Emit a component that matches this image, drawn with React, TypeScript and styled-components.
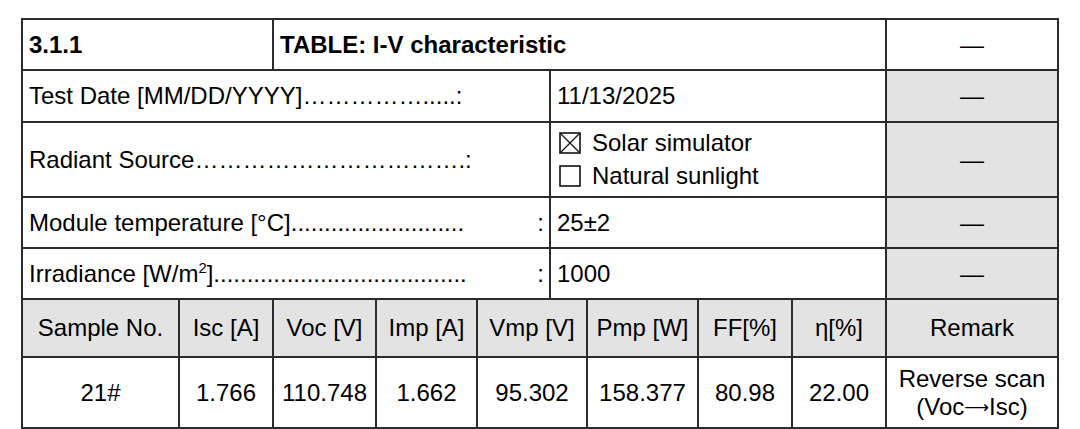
import styled, { createGlobalStyle } from 'styled-components'

const GlobalStyle = createGlobalStyle`
  html, body {
    margin: 0;
    padding: 0;
    background: #fff;
  }
  body {
    font-family: 'Liberation Sans', Arial, sans-serif;
    color: #000;
    overflow: hidden;
  }
`

const Page = styled.div`
  width: 1080px;
  height: 429px;
  padding: 18px 0 0 21px;
  box-sizing: border-box;
  overflow: hidden;
`

const Sheet = styled.div`
  display: grid;
  grid-template-columns: 155px 92px 101px 99px 71px 35px 109px 92px 92px 170px;
  grid-template-rows: 49px 50px 73px 49px 49px 56px 69px;
  gap: 2px;
  padding: 2px;
  width: max-content;
  background: #2b2b2b;
`

const Cell = styled.div<{ $span?: number; $shade?: boolean; $center?: boolean; $bold?: boolean }>`
  grid-column: span ${(p) => p.$span ?? 1};
  display: flex;
  align-items: center;
  justify-content: ${(p) => (p.$center ? 'center' : 'flex-start')};
  text-align: ${(p) => (p.$center ? 'center' : 'left')};
  padding: ${(p) => (p.$center ? '0 1px' : '0 6px')};
  background: ${(p) => (p.$shade ? '#e3e3e3' : '#fff')};
  font-size: 24px;
  font-weight: ${(p) => (p.$bold ? 700 : 400)};
  line-height: 1.13;
  white-space: nowrap;
  overflow: hidden;
`

const Label = styled(Cell)`
  justify-content: space-between;
  padding-right: 5px;
`

const Sup = styled.sup`
  font-size: 0.62em;
  line-height: 0;
  vertical-align: 0.62em;
`

const Remark = styled.div`
  text-align: center;
`

const Arrow = styled.span`
  font-family: 'DejaVu Sans', sans-serif;
  font-size: 0.72em;
  vertical-align: 0.12em;
`

const Options = styled.div`
  display: flex;
  flex-direction: column;
  gap: 3px;
  padding-left: 2px;
`

const Option = styled.div`
  display: flex;
  align-items: center;
  gap: 11px;
  height: 30px;
`

const Box = styled.svg`
  width: 22px;
  height: 22px;
  flex: none;
`

function CheckBox({ checked }: { checked?: boolean }) {
  return (
    <Box viewBox="0 0 22 22">
      <rect x="1" y="1" width="20" height="20" fill="none" stroke="#111" strokeWidth="1.6" />
      {checked && (
        <path d="M1.5 1.5 L20.5 20.5 M20.5 1.5 L1.5 20.5" stroke="#111" strokeWidth="1.2" />
      )}
    </Box>
  )
}

const headers = ['Sample No.', 'Isc [A]', 'Voc [V]', 'Imp [A]', 'Vmp [V]', 'Pmp [W]', 'FF[%]', 'η[%]', 'Remark']
const values = ['21#', '1.766', '110.748', '1.662', '95.302', '158.377', '80.98', '22.00']

export default function App() {
  return (
    <Page>
      <GlobalStyle />
      <Sheet>
        <Cell $span={2} $bold>3.1.1</Cell>
        <Cell $span={7} $bold>TABLE: I-V characteristic</Cell>
        <Cell $center>—</Cell>

        <Cell $span={5}>{'Test Date [MM/DD/YYYY]' + '…'.repeat(5) + '.'.repeat(5) + ':'}</Cell>
        <Cell $span={4}>11/13/2025</Cell>
        <Cell $center $shade>—</Cell>

        <Cell $span={5}>{'Radiant Source' + '…'.repeat(11) + '.:'}</Cell>
        <Cell $span={4}>
          <Options>
            <Option>
              <CheckBox checked />
              Solar simulator
            </Option>
            <Option>
              <CheckBox />
              Natural sunlight
            </Option>
          </Options>
        </Cell>
        <Cell $center $shade>—</Cell>

        <Label $span={5}>
          <span>{'Module temperature [°C]' + '.'.repeat(26)}</span>
          <span>:</span>
        </Label>
        <Cell $span={4}>25±2</Cell>
        <Cell $center $shade>—</Cell>

        <Label $span={5}>
          <span>
            Irradiance [W/m<Sup>2</Sup>]{'.'.repeat(38)}
          </span>
          <span>:</span>
        </Label>
        <Cell $span={4}>1000</Cell>
        <Cell $center $shade>—</Cell>

        {headers.map((h, i) => (
          <Cell key={h} $center $shade $span={i === 4 ? 2 : 1}>
            {h}
          </Cell>
        ))}

        {values.map((v, i) => (
          <Cell key={i} $center $span={i === 4 ? 2 : 1}>
            {v}
          </Cell>
        ))}
        <Cell $center>
          <Remark>
            Reverse scan
            <br />
            (Voc<Arrow>⟶</Arrow>Isc)
          </Remark>
        </Cell>
      </Sheet>
    </Page>
  )
}
